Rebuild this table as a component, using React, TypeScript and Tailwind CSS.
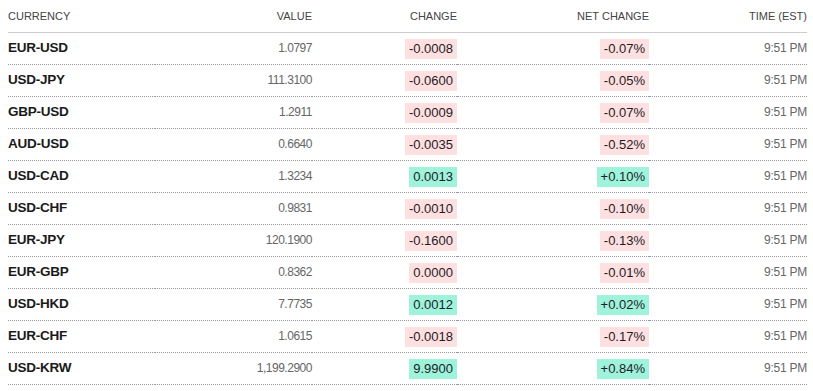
import React from "react";

interface Rate {
  pair: string;
  value: string;
  change: string;
  netChange: string;
  time: string;
}

const rates: Rate[] = [
  { pair: "EUR-USD", value: "1.0797", change: "-0.0008", netChange: "-0.07%", time: "9:51 PM" },
  { pair: "USD-JPY", value: "111.3100", change: "-0.0600", netChange: "-0.05%", time: "9:51 PM" },
  { pair: "GBP-USD", value: "1.2911", change: "-0.0009", netChange: "-0.07%", time: "9:51 PM" },
  { pair: "AUD-USD", value: "0.6640", change: "-0.0035", netChange: "-0.52%", time: "9:51 PM" },
  { pair: "USD-CAD", value: "1.3234", change: "0.0013", netChange: "+0.10%", time: "9:51 PM" },
  { pair: "USD-CHF", value: "0.9831", change: "-0.0010", netChange: "-0.10%", time: "9:51 PM" },
  { pair: "EUR-JPY", value: "120.1900", change: "-0.1600", netChange: "-0.13%", time: "9:51 PM" },
  { pair: "EUR-GBP", value: "0.8362", change: "0.0000", netChange: "-0.01%", time: "9:51 PM" },
  { pair: "USD-HKD", value: "7.7735", change: "0.0012", netChange: "+0.02%", time: "9:51 PM" },
  { pair: "EUR-CHF", value: "1.0615", change: "-0.0018", netChange: "-0.17%", time: "9:51 PM" },
  { pair: "USD-KRW", value: "1,199.2900", change: "9.9900", netChange: "+0.84%", time: "9:51 PM" },
];

function Pill({ text, up }: { text: string; up: boolean }) {
  return (
    <span
      className={
        up
          ? "inline-block bg-[#9ff3db] px-1 leading-[20px] text-[13px] text-[#1c1c28]"
          : "inline-block bg-[#ffe0e0] px-1 leading-[20px] text-[13px] text-[#1c1c28]"
      }
    >
      {text}
    </span>
  );
}

export default function App() {
  return (
    <div className="bg-white w-[813px] h-[391px] pl-2" style={{ fontFamily: '"Liberation Sans", Arial, sans-serif' }}>
      <table className="w-[799px] table-fixed">
        <colgroup>
          <col className="w-[147px]" />
          <col className="w-[157px]" />
          <col className="w-[145px]" />
          <col className="w-[192px]" />
          <col className="w-[158px]" />
        </colgroup>
        <thead>
          <tr className="h-8 border-b border-[#cccccc] text-[11px] text-[#444444] uppercase">
            <th className="text-left font-normal p-0">Currency</th>
            <th className="text-right font-normal p-0">Value</th>
            <th className="text-right font-normal p-0">Change</th>
            <th className="text-right font-normal p-0">Net Change</th>
            <th className="text-right font-normal p-0">Time (EST)</th>
          </tr>
        </thead>
        <tbody>
          {rates.map((r) => {
            const up = r.change.startsWith("-") ? false : r.change !== "0.0000";
            const netUp = r.netChange.startsWith("+");
            return (
              <tr key={r.pair} className="h-8 border-b border-dotted border-[#999999]">
                <td className="p-0 text-[13.5px] font-bold text-[#1a1a1a] tracking-[-0.02em]">{r.pair}</td>
                <td className="p-0 text-right text-[12px] text-[#666666] tracking-[-0.04em]">{r.value}</td>
                <td className="p-0 text-right">
                  <Pill text={r.change} up={up} />
                </td>
                <td className="p-0 text-right">
                  <Pill text={r.netChange} up={netUp} />
                </td>
                <td className="p-0 text-right text-[12px] text-[#666666] tracking-[-0.02em]">{r.time}</td>
              </tr>
            );
          })}
        </tbody>
      </table>
    </div>
  );
}
